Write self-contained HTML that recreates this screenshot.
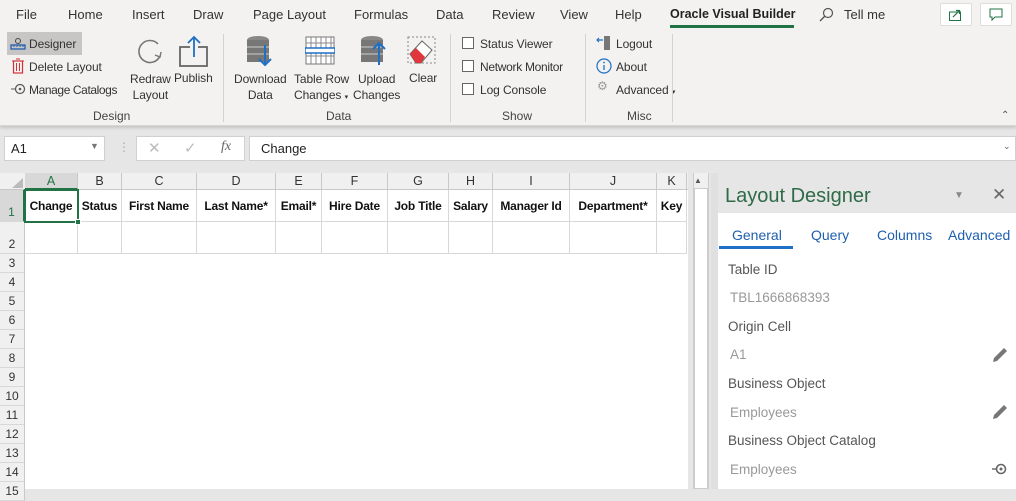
<!DOCTYPE html>
<html><head><meta charset="utf-8"><style>
*{box-sizing:border-box;margin:0;padding:0}
body{width:1016px;height:489px;overflow:hidden;background:#e6e6e6;font-family:"Segoe UI","Liberation Sans",sans-serif;font-size:13px;color:#222;position:relative}
.a{position:absolute;white-space:nowrap}
.tabs{top:0;left:0;width:1016px;height:30px;background:#f3f2f1}
.ribbon{top:30px;left:0;width:1016px;height:96px;background:#f3f2f1;border-bottom:1px solid #d6d6d6;box-shadow:0 2px 3px rgba(0,0,0,.15)}
.t{font-size:13px;color:#333;top:7px}
.sep{width:1px;background:#d2d2d2;top:34px;height:88px}
.grp{font-size:12px;color:#444;top:109px}
.lbl{font-size:12px;color:#333;letter-spacing:-0.1px}
.cb{width:12px;height:12px;border:1px solid #666;background:#fff}
.grid{left:0;top:173px;width:688px;height:316px;background:#fff}
.hdr{background:#f0f0f0;color:#333;font-size:12.5px;text-align:center}
.cell{border-right:1px solid #d8d8d8;border-bottom:1px solid #d8d8d8;font-weight:bold;font-size:12px;letter-spacing:-0.2px;line-height:32px;text-align:center;color:#111;overflow:hidden}
.rh{left:0;width:25px;background:#f0f0f0;border-right:1px solid #c8c8c8;border-bottom:1px solid #d8d8d8;font-size:12px;text-align:center;color:#333}
.pane{left:718px;top:213px;width:298px;height:276px;background:#fff}
.pl{font-size:13.5px;color:#555}
.pv{font-size:13.5px;color:#999}
</style></head><body>
<div class="a tabs"></div>
<div class="a t" style="left:16px">File</div>
<div class="a t" style="left:68px">Home</div>
<div class="a t" style="left:132px">Insert</div>
<div class="a t" style="left:193px">Draw</div>
<div class="a t" style="left:253px">Page Layout</div>
<div class="a t" style="left:354px">Formulas</div>
<div class="a t" style="left:436px">Data</div>
<div class="a t" style="left:492px">Review</div>
<div class="a t" style="left:560px">View</div>
<div class="a t" style="left:615px">Help</div>
<div class="a t" style="left:670px;font-weight:bold;color:#222;font-size:12.5px">Oracle Visual Builder</div>
<div class="a" style="left:670px;top:25px;width:124px;height:3px;background:#217346"></div>
<svg class="a" style="left:818px;top:7px" width="16" height="16"><circle cx="10" cy="6" r="4.5" fill="none" stroke="#555" stroke-width="1.2"/><line x1="7" y1="9" x2="2" y2="14" stroke="#555" stroke-width="1.4"/></svg>
<div class="a t" style="left:844px">Tell me</div>
<div class="a" style="left:940px;top:3px;width:32px;height:23px;background:#fff;border:1px solid #ddd;border-radius:2px"></div>
<svg class="a" style="left:948px;top:7px" width="16" height="15"><rect x="1.5" y="5" width="11" height="8.5" fill="none" stroke="#217346"/><path d="M5 10 L11 4 M8 3.5 H11.5 V7" fill="none" stroke="#217346" stroke-width="1.2"/></svg>
<div class="a" style="left:980px;top:3px;width:32px;height:23px;background:#fff;border:1px solid #ddd;border-radius:2px"></div>
<svg class="a" style="left:988px;top:7px" width="16" height="15"><path d="M2 2 H14 V10 H7 L4 13 V10 H2 Z" fill="none" stroke="#217346"/></svg>

<div class="a ribbon"></div>
<div class="a" style="left:7px;top:32px;width:75px;height:23px;background:#c8c6c4"></div>
<svg class="a" style="left:10px;top:35px" width="16" height="16"><circle cx="8" cy="6" r="2.5" fill="none" stroke="#444"/><rect x="1" y="10" width="14" height="4" fill="none" stroke="#1f5fad" stroke-width="1.3"/><path d="M4 10v2M7 10v2M10 10v2M13 10v2" stroke="#1f5fad"/></svg>
<div class="a lbl" style="left:29px;top:37px">Designer</div>
<svg class="a" style="left:11px;top:58px" width="14" height="16"><rect x="2.5" y="3" width="9" height="12" fill="none" stroke="#d13438" stroke-width="1.2"/><path d="M1 3H13M5 1H9M5.5 5v8M8.5 5v8" stroke="#d13438"/></svg>
<div class="a lbl" style="left:29px;top:60px">Delete Layout</div>
<svg class="a" style="left:10px;top:82px" width="18" height="14"><circle cx="10" cy="7" r="4.5" fill="none" stroke="#555" stroke-width="1.2"/><circle cx="10" cy="7" r="1.3" fill="#555"/><path d="M1 7H6" stroke="#555"/></svg>
<div class="a lbl" style="left:29px;top:83px;letter-spacing:-0.4px">Manage Catalogs</div>
<svg class="a" style="left:134px;top:36px" width="32" height="32"><path d="M26 20 A11 11 0 1 1 24 8" fill="none" stroke="#777" stroke-width="1.6"/><path d="M27 16 L26 21 L21 19" fill="none" stroke="#777" stroke-width="1.4"/></svg>
<div class="a lbl" style="left:130px;top:71px;text-align:center;line-height:16px">Redraw<br>Layout</div>
<svg class="a" style="left:178px;top:35px" width="32" height="32"><rect x="2" y="12" width="27" height="19" fill="none" stroke="#666" stroke-width="1.8"/><rect x="12" y="11" width="8" height="3" fill="#f3f2f1"/><path d="M16 2V22M10 8L16 2L22 8" fill="none" stroke="#1f6fc5" stroke-width="1.8"/></svg>
<div class="a lbl" style="left:174px;top:71px">Publish</div>
<div class="a grp" style="left:93px">Design</div>
<div class="a sep" style="left:223px"></div>

<svg class="a" style="left:245px;top:35px" width="32" height="33"><ellipse cx="13" cy="5" rx="11" ry="4" fill="#888"/><rect x="2" y="5" width="22" height="22" fill="#777"/><path d="M2 12H24M2 19H24" stroke="#ccc"/><path d="M20 10V30M14 24L20 30L26 24" fill="none" stroke="#1f6fc5" stroke-width="2"/></svg>
<div class="a lbl" style="left:234px;top:71px;text-align:center;line-height:16px">Download<br>Data</div>
<svg class="a" style="left:305px;top:36px" width="30" height="30"><rect x="1" y="1" width="28" height="27" fill="#fff" stroke="#777"/><path d="M1 7H29M1 13H29M1 20H29M6 1V28M11 1V28M16 1V28M21 1V28M26 1V28" stroke="#888"/><rect x="0" y="12" width="30" height="5" fill="#fff" stroke="#1f6fc5" stroke-width="1.5"/></svg>
<div class="a lbl" style="left:294px;top:71px;line-height:16px">Table Row<br>Changes <span style="font-size:7px">▾</span></div>
<svg class="a" style="left:359px;top:35px" width="32" height="33"><ellipse cx="13" cy="5" rx="11" ry="4" fill="#888"/><rect x="2" y="5" width="22" height="22" fill="#777"/><path d="M2 12H24M2 19H24" stroke="#ccc"/><path d="M20 30V8M14 14L20 8L26 14" fill="none" stroke="#1f6fc5" stroke-width="2"/></svg>
<div class="a lbl" style="left:353px;top:71px;text-align:center;line-height:16px">Upload<br>Changes</div>
<svg class="a" style="left:405px;top:36px" width="32" height="30"><rect x="3" y="1" width="27" height="26" fill="none" stroke="#888" stroke-dasharray="2 2"/><path d="M5 18L17 5L27 14L16 27H11Z" fill="#fff" stroke="#666"/><path d="M5 18L11 12L20 21L16 27H11Z" fill="#e0363c"/></svg>
<div class="a lbl" style="left:409px;top:71px">Clear</div>
<div class="a grp" style="left:326px">Data</div>
<div class="a sep" style="left:450px"></div>

<div class="a cb" style="left:462px;top:37px"></div><div class="a lbl" style="left:480px;top:37px">Status Viewer</div>
<div class="a cb" style="left:462px;top:60px"></div><div class="a lbl" style="left:480px;top:60px;letter-spacing:-0.3px">Network Monitor</div>
<div class="a cb" style="left:462px;top:83px"></div><div class="a lbl" style="left:480px;top:83px">Log Console</div>
<div class="a grp" style="left:502px">Show</div>
<div class="a sep" style="left:585px"></div>
<svg class="a" style="left:596px;top:35px" width="16" height="17"><rect x="8" y="1" width="6" height="14" fill="#777"/><path d="M1 5H7M3 3L1 5L3 7" fill="none" stroke="#1f6fc5" stroke-width="1.2"/></svg>
<div class="a lbl" style="left:616px;top:37px">Logout</div>
<svg class="a" style="left:596px;top:58px" width="16" height="16"><circle cx="8" cy="8" r="7" fill="none" stroke="#1f6fc5" stroke-width="1.2"/><path d="M8 7V12" stroke="#1f6fc5" stroke-width="1.3"/><circle cx="8" cy="4.5" r=".9" fill="#1f6fc5"/></svg>
<div class="a lbl" style="left:616px;top:60px">About</div>
<div class="a" style="left:597px;top:79px;font-size:12px;color:#999">⚙</div>
<div class="a lbl" style="left:616px;top:83px">Advanced <span style="font-size:7px">▾</span></div>
<div class="a grp" style="left:627px">Misc</div>
<div class="a sep" style="left:672px"></div>
<div class="a" style="left:1001px;top:110px;font-size:10px;color:#555">⌃</div>

<div class="a" style="left:4px;top:136px;width:101px;height:25px;background:#fff;border:1px solid #d0d0d0"></div>
<div class="a" style="left:11px;top:141px;font-size:13px">A1</div>
<div class="a" style="left:90px;top:141px;font-size:9px;color:#777">▼</div>
<div class="a" style="left:118px;top:140px;color:#aaa;font-size:12px">⋮</div>
<div class="a" style="left:136px;top:136px;width:109px;height:25px;background:#fff;border:1px solid #d0d0d0"></div>
<div class="a" style="left:148px;top:139px;color:#bbb;font-size:15px">✕</div>
<div class="a" style="left:184px;top:139px;color:#bbb;font-size:15px">✓</div>
<div class="a" style="left:221px;top:139px;color:#666;font-style:italic;font-family:'Liberation Serif',serif;font-size:14px">fx</div>
<div class="a" style="left:249px;top:136px;width:767px;height:25px;background:#fff;border:1px solid #d0d0d0"></div>
<div class="a" style="left:261px;top:141px;font-size:13px">Change</div>
<div class="a" style="left:1003px;top:141px;font-size:9px;color:#666">⌄</div>

<div class="a grid"></div>
<div class="a hdr" style="left:0;top:173px;width:688px;height:17px;border-bottom:1px solid #c8c8c8"></div>
<svg class="a" style="left:6px;top:177px" width="18" height="12"><path d="M17 1V11H6Z" fill="#bbb"/></svg>
<div id="cols"></div>
<div class="a" style="left:693px;top:173px;width:16px;height:316px;background:#f0f0f0;border-left:1px solid #ccc;border-right:1px solid #ccc"></div>
<div class="a" style="left:694px;top:176px;font-size:8px;color:#555">▲</div>
<div class="a" style="left:694px;top:188px;width:14px;height:301px;background:#fff;border:1px solid #ccc"></div>
<div class="a" style="left:711px;top:173px;width:7px;height:316px;background:#e0e0e0"></div>

<div class="a" style="left:725px;top:185px;font-size:20px;color:#2f6b46;font-weight:300">Layout Designer</div>
<div class="a" style="left:954px;top:190px;font-size:10px;color:#888">▼</div>
<div class="a" style="left:992px;top:185px;font-size:17px;color:#666">✕</div>
<div class="a pane"></div>
<div class="a" style="left:732px;top:227px;font-size:14px;color:#1f5fad">General</div>
<div class="a" style="left:719px;top:246px;width:74px;height:3px;background:#1f6fc5"></div>
<div class="a" style="left:811px;top:227px;font-size:14px;color:#1f5fad">Query</div>
<div class="a" style="left:877px;top:227px;font-size:14px;color:#1f5fad">Columns</div>
<div class="a" style="left:948px;top:227px;font-size:14px;color:#1f5fad">Advanced</div>
<div class="a pl" style="left:728px;top:262px">Table ID</div>
<div class="a pv" style="left:730px;top:290px">TBL1666868393</div>
<div class="a pl" style="left:728px;top:319px">Origin Cell</div>
<div class="a pv" style="left:730px;top:347px">A1</div>
<div class="a pl" style="left:728px;top:376px">Business Object</div>
<div class="a pv" style="left:730px;top:405px">Employees</div>
<div class="a pl" style="left:728px;top:433px">Business Object Catalog</div>
<div class="a pv" style="left:730px;top:462px">Employees</div>
<svg class="a" style="left:991px;top:346px" width="18" height="18"><path d="M2 16L3 12L13 2L16 5L6 15Z" fill="#777"/></svg>
<svg class="a" style="left:991px;top:403px" width="18" height="18"><path d="M2 16L3 12L13 2L16 5L6 15Z" fill="#777"/></svg>
<svg class="a" style="left:991px;top:462px" width="18" height="14"><circle cx="10" cy="7" r="4.5" fill="none" stroke="#666" stroke-width="1.6"/><circle cx="10" cy="7" r="1.5" fill="#666"/><path d="M1 7H6" stroke="#666" stroke-width="1.4"/></svg>

<script>
var c=[["A",25,78,"Change"],["B",78,122,"Status"],["C",122,197,"First Name"],["D",197,276,"Last Name*"],["E",276,322,"Email*"],["F",322,388,"Hire Date"],["G",388,449,"Job Title"],["H",449,493,"Salary"],["I",493,570,"Manager Id"],["J",570,657,"Department*"],["K",657,687,"Key"]];
var h="";
c.forEach(function(x){var w=x[2]-x[1];
h+='<div class="a hdr" style="left:'+x[1]+'px;top:173px;width:'+w+'px;height:17px;line-height:17px;border-right:1px solid #c8c8c8;border-bottom:1px solid #c8c8c8;'+(x[0]=="A"?'background:#d8d8d8;color:#217346;border-bottom:2px solid #217346':'')+'">'+x[0]+'</div>';
h+='<div class="a cell" style="left:'+x[1]+'px;top:190px;width:'+w+'px;height:32px">'+x[3]+'</div>';
h+='<div class="a cell" style="left:'+x[1]+'px;top:222px;width:'+w+'px;height:32px"></div>';});
h+='<div class="a rh" style="top:190px;height:32px;line-height:44px;background:#d8d8d8;color:#217346;border-right:2px solid #217346">1</div>';
h+='<div class="a rh" style="top:222px;height:32px;line-height:44px">2</div>';
for(var i=3;i<=15;i++){var t=254+(i-3)*19;h+='<div class="a rh" style="top:'+t+'px;height:19px;line-height:19px">'+i+'</div>';}
h+='<div class="a" style="left:24px;top:189px;width:55px;height:34px;border:2px solid #217346"></div><div class="a" style="left:75px;top:219px;width:6px;height:6px;background:#217346;border:1px solid #fff"></div>';
document.getElementById("cols").innerHTML=h;
</script>
</body></html>
